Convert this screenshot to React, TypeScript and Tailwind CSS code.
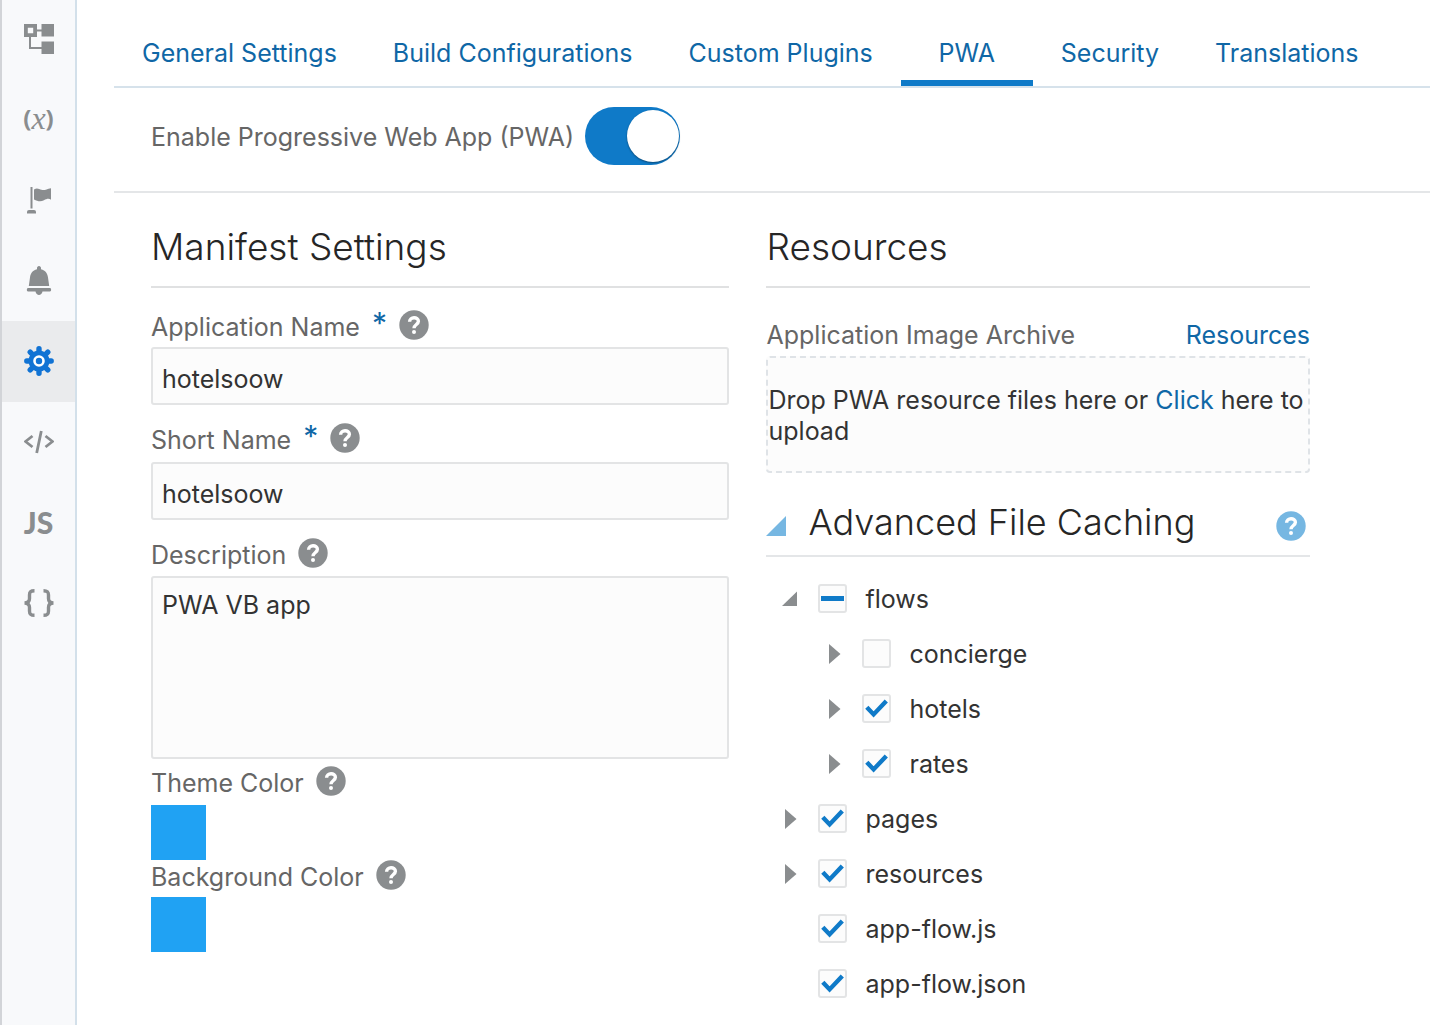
import { ReactNode, useEffect, useRef } from "react";
import clsx from "clsx";

type TreeNode = {
    name: string;
    state: "on" | "off" | "mixed";
    folder?: boolean;
    children?: TreeNode[];
};

const tabs = [
    "General Settings",
    "Build Configurations",
    "Custom Plugins",
    "PWA",
    "Security",
    "Translations",
];

const files: TreeNode[] = [
    {
        name: "flows",
        state: "mixed",
        folder: true,
        children: [
            { name: "concierge", state: "off", folder: true },
            { name: "hotels", state: "on", folder: true },
            { name: "rates", state: "on", folder: true },
        ],
    },
    { name: "pages", state: "on", folder: true },
    { name: "resources", state: "on", folder: true },
    { name: "app-flow.js", state: "on" },
    { name: "app-flow.json", state: "on" },
];

export default function App() {
    return (
        <div className="flex min-h-screen bg-white font-['Inter',sans-serif] text-[25px] leading-[31px] text-[#333333]">
            <Sidebar />

            <main className="min-w-0 flex-1 pl-[37px]">
                <Tabs />

                <div className="flex h-[105px] items-center gap-[11px] border-b-2 border-[#e4e6e8] pb-2 pl-[37px]">
                    <label htmlFor="enable-pwa" className="pt-1 text-[#666666]">
                        Enable Progressive Web App (PWA)
                    </label>
                    <input
                        id="enable-pwa"
                        type="checkbox"
                        role="switch"
                        defaultChecked
                        className="flex h-[58px] w-[95px] appearance-none items-center rounded-full bg-[#c4c8cb] px-px after:size-[52px] after:rounded-full after:bg-white after:shadow-[0_1px_2px_rgba(0,0,0,0.4)] checked:justify-end checked:bg-[#0f7ac8]"
                    />
                </div>

                <div className="grid grid-cols-[579fr_544fr] gap-[37px] pt-[29px] pr-[120px] pl-[37px]">
                    <ManifestSettings />
                    <Resources />
                </div>
            </main>
        </div>
    );
}

function Sidebar() {
    return (
        <nav className="w-[77px] shrink-0 border-r-2 border-l-2 border-r-[#d3e0ea] border-l-[#d2d4d8] bg-[#f8f9fb]">
            <div className="-mt-px flex h-[644px] flex-col">
                <SidebarItem label="Structure">
                    <svg viewBox="0 0 30 30" className="size-[30px]" fill="currentColor">
                        <path d="M0 0h13v13H0zM3.800 3.800v5.400h5.400V3.800z" fillRule="evenodd" />
                        <path d="M17.500 0H30v12.500H17.500zM17.500 17.500H30V30H17.500z" />
                        <path d="M13 6.500h5M6 13v11h12" fill="none" stroke="currentColor" strokeWidth="2" />
                    </svg>
                </SidebarItem>
                <SidebarItem label="Variables">
                    <span className="flex items-center pb-1 text-[24px] leading-none">
                        <span className="font-['Open_Sans',sans-serif] font-bold">(</span>
                        <span className="font-['Liberation_Serif',serif] text-[32px] leading-[24px] italic">x</span>
                        <span className="font-['Open_Sans',sans-serif] font-bold">)</span>
                    </span>
                </SidebarItem>
                <SidebarItem label="Flags">
                    <svg viewBox="0 0 30 30" className="size-[30px]" fill="currentColor">
                        <path d="M6.500 2h2v21.500h-2z" />
                        <path d="M3 28.500v-1.500q0-2 2-2h5q2 0 2 2v1.500z" />
                        <path d="M10 4.500c3-2 5-.5 7.500.3 3 .9 5-.8 9.500-1.600v11.500c-2-1.500-4.500-.8-7 .5-3.500 2-6.500 1-10-.7z" />
                    </svg>
                </SidebarItem>
                <SidebarItem label="Notifications">
                    <svg viewBox="0 0 30 30" className="size-[30px]" fill="currentColor">
                        <path d="M15 0c1.200 0 2 1 2 2v1.200c4.500 1 6.600 4.300 7 8.300l1.200 8.500H4.800L6 11.500c.4-4 2.500-7.300 7-8.300V2c0-1 .8-2 2-2z" />
                        <path d="M4 22h22c1.500 0 1.500 3.500 0 3.500h-7.500c-.8 4.500-6.200 4.500-7 0H4c-1.500 0-1.500-3.500 0-3.500z" />
                    </svg>
                </SidebarItem>
                <SidebarItem label="Settings" active>
                    <Gear />
                </SidebarItem>
                <SidebarItem label="Source">
                    <svg
                        viewBox="0 0 30 24"
                        className="h-6 w-[30px]"
                        fill="none"
                        stroke="currentColor"
                        strokeWidth="2.800"
                    >
                        <path d="M8.500 6 1.500 11.500l7 5.500M21.500 6l7 5.500-7 5.500M17.300 1l-4.600 22" />
                    </svg>
                </SidebarItem>
                <SidebarItem label="JavaScript">
                    <span className="font-['Lato',sans-serif] text-[30px] leading-none font-black">
                        JS
                    </span>
                </SidebarItem>
                <SidebarItem label="JSON">
                    <svg
                        viewBox="0 0 30 28"
                        className="h-7 w-[30px]"
                        fill="none"
                        stroke="currentColor"
                        strokeWidth="3.400"
                    >
                        <path d="M10.500 1.700C6.500 1.700 5.500 3 5.500 6v3.500c0 3-1.500 4.500-5 4.500 3.500 0 5 1.500 5 4.500V22c0 3 1 4.300 5 4.300" />
                        <path d="M19.500 1.700c4 0 5 1.300 5 4.300v3.500c0 3 1.500 4.500 5 4.500-3.500 0-5 1.500-5 4.500V22c0 3-1 4.300-5 4.300" />
                    </svg>
                </SidebarItem>
            </div>
        </nav>
    );
}

function SidebarItem({
    label,
    active,
    children,
}: {
    label: string;
    active?: boolean;
    children: ReactNode;
}) {
    return (
        <button
            type="button"
            aria-label={label}
            className={clsx(
                "flex min-h-0 flex-1 items-center justify-center",
                active ? "bg-[#eaebed] text-[#1173d4]" : "text-[#8a8d8f]"
            )}
        >
            {children}
        </button>
    );
}

function Gear() {
    return (
        <svg viewBox="0 0 30 30" className="size-[30px]">
            <g stroke="currentColor" strokeWidth="5.400" strokeLinecap="round">
                <path d="M15 2.800v24.400M2.800 15h24.400M6.200 6.200l17.600 17.600M23.800 6.200 6.200 23.800" />
            </g>
            <circle cx="15" cy="15" r="10.500" fill="currentColor" />
            <circle cx="15" cy="15" r="4.500" fill="currentColor" stroke="#fff" strokeWidth="2.600" />
        </svg>
    );
}

function Tabs() {
    return (
        <div role="tablist" className="flex h-[88px] border-b-2 border-[#d6e2eb]">
            {tabs.map((tab) => (
                <button
                    key={tab}
                    type="button"
                    role="tab"
                    aria-selected={tab === "PWA"}
                    className={clsx(
                        "min-w-[132px] border-b-[6px] px-[28px] pt-[26px] whitespace-nowrap text-[#0f67a6]",
                        tab === "PWA" ? "border-[#0f7ac8]" : "border-transparent"
                    )}
                >
                    {tab}
                </button>
            ))}
        </div>
    );
}

function ManifestSettings() {
    return (
        <section>
            <SectionTitle>Manifest Settings</SectionTitle>

            <FieldLabel id="app-name" required className="mt-[22px] pb-1">
                Application Name
            </FieldLabel>
            <TextInput id="app-name" value="hotelsoow" />

            <FieldLabel id="short-name" required className="mt-[18px] pb-[6px]">
                Short Name
            </FieldLabel>
            <TextInput id="short-name" value="hotelsoow" />

            <FieldLabel id="description" className="mt-[18px] pb-[5px]">
                Description
            </FieldLabel>
            <textarea
                id="description"
                defaultValue="PWA VB app"
                className="block h-[183px] w-full resize-none rounded-[3px] border-2 border-[#e3e4e5] bg-[#fcfcfc] px-[9px] py-3"
            />

            <FieldLabel id="theme-color" className="mt-[7px] pb-[6px]">
                Theme Color
            </FieldLabel>
            <ColorInput id="theme-color" />

            <FieldLabel id="background-color" className="pb-1">
                Background Color
            </FieldLabel>
            <ColorInput id="background-color" />
        </section>
    );
}

function Resources() {
    return (
        <section>
            <SectionTitle>Resources</SectionTitle>

            <div className="mt-8 flex h-9 items-start justify-between">
                <span className="text-[#666666]">Application Image Archive</span>
                <a href="#resources" className="text-[#0f67a6]">
                    Resources
                </a>
            </div>
            <div className="h-[117px] rounded-[4px] border-2 border-dashed border-[#dfe3e7] bg-[#fcfcfc] pt-[27px]">
                Drop PWA resource files here or{" "}
                <a href="#upload" className="text-[#0f67a6]">
                    Click
                </a>{" "}
                here to upload
            </div>

            <div className="mt-6 flex h-[60px] items-center border-b-2 border-[#e4e6e8]">
                <button type="button" aria-label="Collapse Advanced File Caching" className="text-[#76b7e2]">
                    <svg viewBox="0 0 20 20" className="size-5" fill="currentColor">
                        <path d="M20 0v20H0z" />
                    </svg>
                </button>
                <h2 className="ml-[22px] flex-1 pb-2 text-[36px] leading-[46px] font-light text-[#262626]">
                    Advanced File Caching
                </h2>
                <Help className="mr-1 text-[#76b7e2]" />
            </div>

            <ul className="pt-[14px] pl-4">
                {files.map((node) => (
                    <TreeItem key={node.name} node={node} />
                ))}
            </ul>
        </section>
    );
}

function SectionTitle({ children }: { children: ReactNode }) {
    return (
        <h2 className="h-[66px] border-b-2 border-[#e0e1e2] text-[37px] leading-[50px] font-light text-[#262626]">
            {children}
        </h2>
    );
}

function FieldLabel({
    id,
    required,
    className,
    children,
}: {
    id: string;
    required?: boolean;
    className?: string;
    children: ReactNode;
}) {
    return (
        <div className={clsx("flex items-start", className)}>
            <label htmlFor={id} className="flex pt-[2px] pr-3 text-[#666666]">
                {children}
                {required && (
                    <span className="pl-3 text-[30px] leading-[22px] text-[#0f67a6]">*</span>
                )}
            </label>
            <Help className="text-[#8a8d8f]" />
        </div>
    );
}

function TextInput({ id, value }: { id: string; value: string }) {
    return (
        <input
            id={id}
            type="text"
            defaultValue={value}
            className="block h-[58px] w-full rounded-[3px] border-2 border-[#e3e4e5] bg-[#fcfcfc] px-[9px] pt-[6px]"
        />
    );
}

function ColorInput({ id }: { id: string }) {
    return (
        <input
            id={id}
            type="color"
            defaultValue="#20a2f3"
            className="block size-[55px] appearance-none [&::-webkit-color-swatch]:rounded-none [&::-webkit-color-swatch]:border-0 [&::-webkit-color-swatch-wrapper]:p-0"
        />
    );
}

function Help({ className }: { className?: string }) {
    return (
        <button type="button" aria-label="Help" className={className}>
            <svg viewBox="0 0 30 30" className="size-[30px]">
                <circle cx="15" cy="15" r="14.700" fill="currentColor" />
                <path
                    d="M10.600 11.800c0-5.300 8.800-5.300 8.800-.5 0 3.200-4.400 3.200-4.400 7"
                    fill="none"
                    stroke="#fff"
                    strokeWidth="3.400"
                />
                <circle cx="15" cy="22" r="2" fill="#fff" />
            </svg>
        </button>
    );
}

function TreeItem({ node }: { node: TreeNode }) {
    return (
        <li>
            <div className="flex h-[55px] items-center">
                <div className="flex w-9 items-center text-[#8a8d8f]">
                    {node.folder && <Disclosure open={!!node.children} name={node.name} />}
                </div>
                <Checkbox id={node.name} state={node.state} />
                <label htmlFor={node.name} className="pt-[2px] pl-[18px]">
                    {node.name}
                </label>
            </div>
            {node.children && (
                <ul className="pl-11">
                    {node.children.map((child) => (
                        <TreeItem key={child.name} node={child} />
                    ))}
                </ul>
            )}
        </li>
    );
}

function Disclosure({ open, name }: { open: boolean; name: string }) {
    return (
        <button type="button" aria-label={`Toggle ${name}`} aria-expanded={open}>
            <svg viewBox="0 0 16 20" className="h-5 w-4" fill="currentColor">
                {open ? <path d="M15 2.500v14.500H0z" /> : <path d="M3 0l11.500 10L3 20z" />}
            </svg>
        </button>
    );
}

function Checkbox({ id, state }: { id: string; state: TreeNode["state"] }) {
    const ref = useRef<HTMLInputElement>(null);

    useEffect(() => {
        if (ref.current) {
            ref.current.indeterminate = state === "mixed";
        }
    }, [state]);

    return (
        <span className="grid size-[29px] place-items-center">
            <input
                ref={ref}
                id={id}
                type="checkbox"
                defaultChecked={state === "on"}
                className="peer col-start-1 row-start-1 size-[29px] appearance-none rounded-[3px] border-2 border-[#e3e4e5] bg-[#fcfcfc]"
            />
            <svg
                viewBox="0 0 29 29"
                className="pointer-events-none col-start-1 row-start-1 hidden size-[29px] peer-checked:block"
                fill="none"
                stroke="#0f7ac8"
                strokeWidth="4.400"
            >
                <path d="M4.800 13.200l6.800 7.200L24.300 7" />
            </svg>
            <span className="pointer-events-none col-start-1 row-start-1 hidden h-[5px] w-[23px] bg-[#0f7ac8] peer-indeterminate:block" />
        </span>
    );
}
